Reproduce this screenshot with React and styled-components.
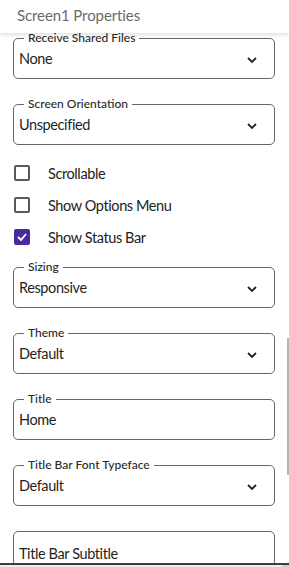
import styled, { createGlobalStyle } from "styled-components";

const GlobalStyle = createGlobalStyle`
  html, body {
    margin: 0;
    padding: 0;
    background: #ffffff;
  }
  body {
    font-family: Lato, "Noto Sans", sans-serif;
    color: #222;
  }
`;

const Page = styled.div`
  position: relative;
  width: 289px;
  height: 567px;
  overflow: hidden;
  display: flex;
  flex-direction: column;
`;

const Header = styled.div`
  position: relative;
  z-index: 2;
  flex: 0 0 33px;
  display: flex;
  align-items: center;
  padding-left: 17px;
  padding-bottom: 4px;
  box-sizing: border-box;
  background: #fff;
  box-shadow: 0 2px 4px rgba(0, 0, 0, 0.12);
  font-size: 15px;
  letter-spacing: -0.1px;
  color: #6b6b6b;
`;

const Scroll = styled.div`
  flex: 1;
  overflow: hidden;
`;

const Content = styled.div`
  margin-top: -2px;
  padding: 0 14px 0 13px;
  display: flex;
  flex-direction: column;
  gap: 18px;
`;

const Field = styled.fieldset`
  margin: 0;
  padding: ${(p) => (p.$tall ? "13px 16px 0 5px" : "0 16px 0 5px")};
  min-width: 0;
  height: ${(p) => (p.$tall ? "60px" : "48px")};
  box-sizing: border-box;
  border: 1px solid #666;
  border-radius: 5px;
  display: flex;
  align-items: ${(p) => (p.$tall ? "flex-start" : "center")};
  justify-content: space-between;
  margin-top: ${(p) => p.$top || 0}px;
`;

const Legend = styled.legend`
  margin-left: 5px;
  padding: 0 4px;
  font-size: 12px;
  line-height: 14px;
  font-weight: 500;
  color: #2a2a2a;
`;

const Value = styled.span`
  font-size: 14.5px;
  line-height: 18px;
  letter-spacing: -0.4px;
  color: #1f1f1f;
  padding-top: ${(p) => (p.$low ? "0" : "5px")};
`;

const Chevron = styled.svg`
  width: 12px;
  height: 8px;
  padding-top: 6px;
`;

const Checks = styled.div`
  display: flex;
  flex-direction: column;
  margin: -6px 0 -11px;
`;

const CheckRow = styled.label`
  height: 32px;
  display: flex;
  align-items: center;
  gap: 18px;
  font-size: 14.5px;
  letter-spacing: -0.4px;
  color: #222;
`;

const Box = styled.span`
  width: 16px;
  height: 16px;
  margin-left: 1px;
  box-sizing: border-box;
  border-radius: 2px;
  border: 2px solid ${(p) => (p.$on ? "#4a2a9e" : "#5a5a5a")};
  background: ${(p) => (p.$on ? "#4a2a9e" : "#fff")};
  display: flex;
  align-items: center;
  justify-content: center;
`;

const ScrollThumb = styled.div`
  position: absolute;
  right: 0;
  top: 338px;
  width: 2px;
  height: 137px;
  background: #b5b5b5;
`;

const Footer = styled.div`
  flex: 0 0 2px;
  border-top: 2px solid #3d3d3d;
  background: #ededed;
  display: flex;
  justify-content: flex-end;
`;

const FooterCorner = styled.div`
  width: 7px;
  background: #cfcfcf;
`;

const Down = () => (
  <Chevron viewBox="0 0 12 8">
    <path d="M2 2 L6 6 L10 2" fill="none" stroke="#222" strokeWidth="1.8" />
  </Chevron>
);

const Select = ({ label, value }) => (
  <Field>
    <Legend>{label}</Legend>
    <Value>{value}</Value>
    <Down />
  </Field>
);

const Check = ({ label, on }) => (
  <CheckRow>
    <Box $on={on}>
      {on && (
        <svg width="10" height="8" viewBox="0 0 10 8">
          <path d="M1 4 L4 7 L9 1" fill="none" stroke="#fff" strokeWidth="1.8" />
        </svg>
      )}
    </Box>
    {label}
  </CheckRow>
);

export default function App() {
  return (
    <>
      <GlobalStyle />
      <Page>
        <Header>Screen1 Properties</Header>
        <Scroll>
          <Content>
            <Select label="Receive Shared Files" value="None" />
            <Select label="Screen Orientation" value="Unspecified" />
            <Checks>
              <Check label="Scrollable" />
              <Check label="Show Options Menu" />
              <Check label="Show Status Bar" on />
            </Checks>
            <Select label="Sizing" value="Responsive" />
            <Select label="Theme" value="Default" />
            <Field>
              <Legend>Title</Legend>
              <Value>Home</Value>
            </Field>
            <Select label="Title Bar Font Typeface" value="Default" />
            <Field $tall $top={7}>
              <Value $low>Title Bar Subtitle</Value>
            </Field>
          </Content>
        </Scroll>
        <Footer>
          <FooterCorner />
        </Footer>
        <ScrollThumb />
      </Page>
    </>
  );
}
